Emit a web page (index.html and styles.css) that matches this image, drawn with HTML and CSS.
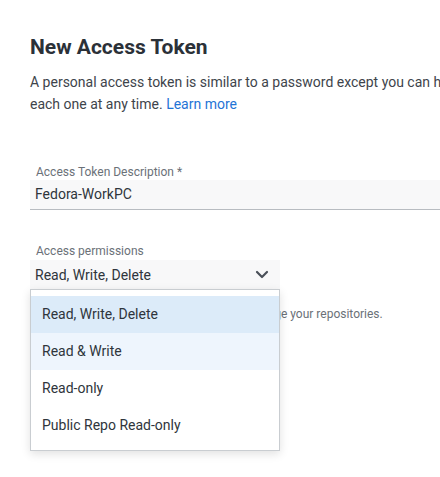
FILE: index.html
```html
<!DOCTYPE html>
<html>
<head>
<meta charset="utf-8">
<link rel="stylesheet" href="styles.css">
</head>
<body>
<main class="page">
  <h1 class="title">New Access Token</h1>
  <p class="intro">A personal access token is similar to a password except you can have many tokens and revoke access to<br>each one at any time. <a class="link" href="#">Learn more</a></p>

  <div class="field field-desc">
    <label class="label">Access Token Description *</label>
    <div class="input">Fedora-WorkPC</div>
  </div>

  <div class="field field-perm">
    <label class="label">Access permissions</label>
    <div class="select-wrap">
      <div class="select">
        <span>Read, Write, Delete</span>
        <svg class="chevron" width="14" height="9" viewBox="0 0 14 9"><path d="M2 2 L7 7 L12 2" fill="none" stroke="#4a5059" stroke-width="2.2" stroke-linecap="round" stroke-linejoin="round"/></svg>
      </div>
      <ul class="menu">
        <li class="opt opt-selected">Read, Write, Delete</li>
        <li class="opt opt-hover">Read &amp; Write</li>
        <li class="opt">Read-only</li>
        <li class="opt">Public Repo Read-only</li>
      </ul>
    </div>
    <p class="helper">Read, Write, Delete tokens allow you to manage your repositories.</p>
  </div>
</main>
</body>
</html>
```
FILE: styles.css
```css
html {
  overflow: hidden;
  background: #ffffff;
}
body {
  margin: 0;
  padding: 0;
  background: #ffffff;
  font-family: Roboto, "Liberation Sans", sans-serif;
  color: #2f353c;
  min-height: 477px;
}
.page {
  padding: 33px 0 0 30px;
  width: 760px;
}
.title {
  margin: 0;
  font-size: 21px;
  line-height: 28px;
  font-weight: 700;
  color: #2b3138;
}
.intro {
  margin: 10px 0 0 0;
  font-size: 14px;
  line-height: 22px;
  color: #3e444b;
  white-space: nowrap;
}
.link {
  color: #1f74d6;
  text-decoration: none;
}
.field-desc {
  margin-top: 49px;
}
.label {
  display: block;
  font-size: 12px;
  line-height: 16px;
  color: #6b7178;
  padding-left: 6px;
}
.input {
  height: 29px;
  line-height: 29px;
  background: #f8f8f9;
  border-bottom: 1px solid #b8bcc1;
  padding-left: 5px;
  font-size: 14px;
  color: #2f353c;
}
.field-perm {
  margin-top: 33px;
}
.select-wrap {
  position: relative;
  width: 250px;
  padding-top: 1px;
}
.select {
  height: 29px;
  background: #f8f8f9;
  display: flex;
  align-items: center;
  justify-content: space-between;
  padding: 0 11px 0 5px;
  font-size: 14px;
  color: #2f353c;
}
.chevron {
  display: block;
}
.menu {
  position: absolute;
  left: 0;
  top: 30px;
  width: 250px;
  box-sizing: border-box;
  margin: 0;
  padding: 6px 0;
  list-style: none;
  background: #ffffff;
  border: 1px solid #c9cdd1;
  box-shadow: 0 3px 9px rgba(0, 0, 0, 0.12);
  z-index: 2;
}
.opt {
  height: 37px;
  line-height: 37px;
  padding-left: 11px;
  font-size: 14px;
  color: #2f353c;
}
.opt-selected {
  background: #dcebf9;
}
.opt-hover {
  background: #eef5fd;
}
.helper {
  margin: 17px 0 0 0;
  padding-left: 6px;
  font-size: 12px;
  line-height: 16px;
  color: #6b7178;
  white-space: nowrap;
}
```
